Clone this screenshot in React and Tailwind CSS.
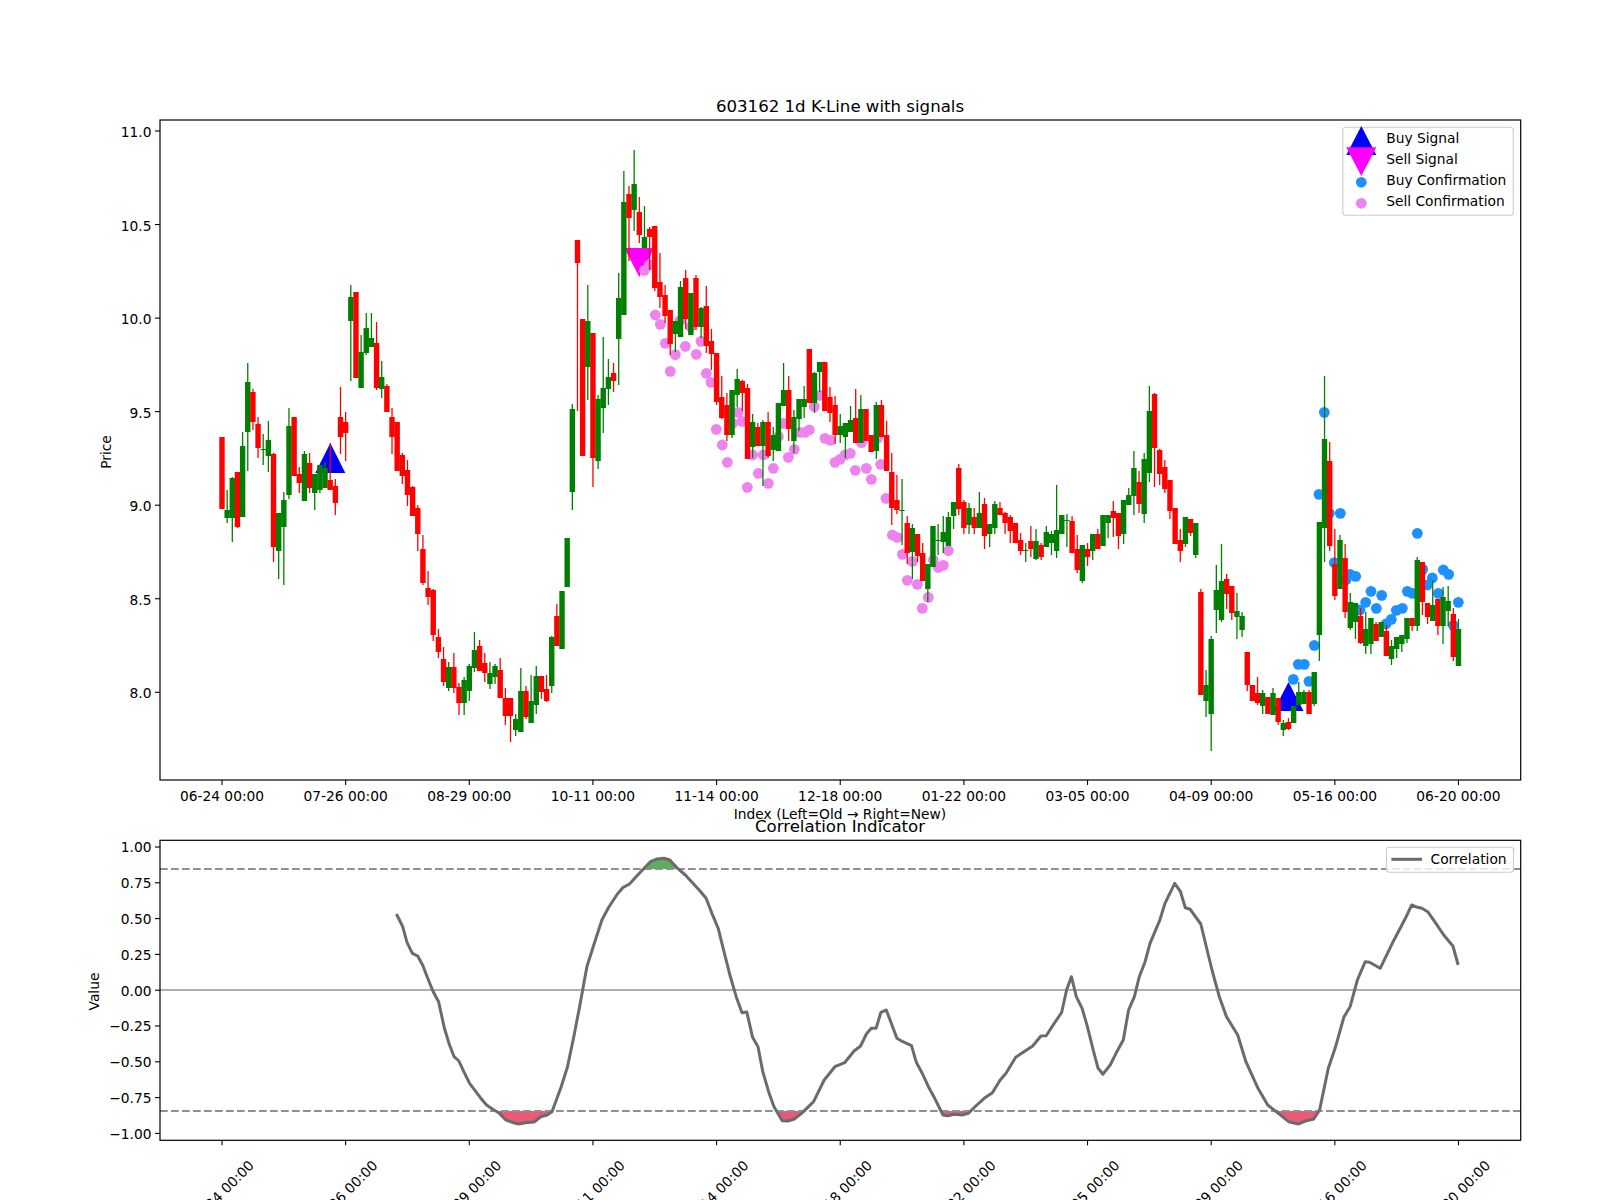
import React from 'react';

const FONT = "font-['DejaVu_Sans','Liberation_Sans',sans-serif]";

const AX_LEFT = 160;
const AX_RIGHT = 1520.7;
const stepX = (i) => 222 + 5.152 * i;

const TICK_LABELS = ['06-24', '07-26', '08-29', '10-11', '11-14', '12-18', '01-22', '03-05', '04-09', '05-16', '06-20'].map(
  (d, n) => ({ label: `${d} 00:00`, x: stepX(n * 24) })
);

// color, body top, body bottom, wick top, wick bottom (pixels on the page)
const CANDLES = [
  ['r',437,509,437,509],['g',510,518,490,523],['g',478,518,477,542],['r',472,527,472,528],['g',446,517,432,517],
  ['g',382,432,363,471],['r',392,422,389,430],['r',424,448,417,458],['g',449,450,434,465],['g',440,456,421,472],
  ['r',454,547,453,562],['g',513,551,513,579],['g',500,527,492,585],['g',426,495,408,499],['r',417,476,417,476],
  ['r',474,483,467,493],['g',454,501,451,501],['r',463,488,453,493],['g',474,493,474,510],['g',465,490,465,493],
  ['g',468,488,462,488],['r',480,490,443,490],['r',486,503,479,515],['r',417,437,387,454],['r',422,433,412,461],
  ['g',297,321,285,381],['r',292,378,292,378],['g',352,388,335,388],['g',328,353,313,355],['g',338,347,313,347],
  ['r',343,388,322,390],['g',377,389,361,398],['r',386,412,384,412],['r',417,437,408,454],['r',422,471,422,471],
  ['r',455,476,453,484],['r',470,495,460,506],['r',487,516,486,516],['r',508,534,505,551],['r',549,583,535,585],
  ['r',588,597,571,605],['r',590,635,589,641],['r',637,652,629,658],['r',659,682,647,686],['g',667,688,662,691],
  ['r',667,688,653,693],['r',687,703,683,715],['g',680,703,677,715],['g',666,691,664,701],['g',650,668,632,672],
  ['r',646,671,640,671],['r',663,673,653,682],['g',673,684,662,689],['g',666,677,664,684],['r',670,698,658,698],
  ['r',698,716,688,725],['r',698,716,698,742],['g',719,730,714,736],['g',691,732,668,732],['r',691,717,686,719],
  ['g',701,723,675,723],['g',676,705,666,714],['r',676,692,676,699],['r',689,701,675,702],['g',637,686,636,693],
  ['r',616,646,604,646],['g',591,649,591,649],['g',538,587,538,587],['g',409,492,404,510],['r',240,263,240,411],
  ['r',319,456,319,456],['g',321,367,285,400],['r',333,458,333,487],['g',399,461,395,469],['g',388,408,337,433],
  ['g',377,389,359,405],['r',373,381,363,392],['g',298,339,273,385],['g',202,315,171,315],['r',194,218,186,261],
  ['g',184,210,150,231],['r',212,235,197,243],['g',237,248,206,249],['r',229,237,227,270],['r',226,288,226,291],
  ['r',282,297,253,308],['r',295,316,285,323],['r',310,344,310,355],['g',321,334,321,352],['g',287,337,281,337],
  ['r',278,319,270,329],['g',293,335,293,335],['r',278,327,275,330],['g',308,327,307,338],['r',306,346,286,353],
  ['r',341,354,329,370],['r',353,402,353,405],['r',397,418,376,419],['r',405,435,393,441],['g',390,435,390,438],
  ['g',379,395,369,407],['r',381,393,380,411],['r',388,459,384,459],['g',422,447,414,458],['r',427,446,423,446],
  ['g',422,446,420,486],['r',422,456,412,458],['g',435,450,427,461],['g',403,451,403,451],['g',390,406,363,406],
  ['r',390,429,376,441],['g',417,441,410,453],['g',399,419,399,431],['g',399,407,386,418],['r',349,403,349,403],
  ['g',373,403,372,413],['g',362,372,362,392],['r',362,411,362,411],['r',397,413,387,422],['r',405,435,396,444],
  ['g',426,435,414,443],['g',423,437,423,458],['g',420,432,406,432],['r',418,443,389,443],['g',409,443,395,443],
  ['r',409,441,409,441],['r',435,452,435,452],['g',405,451,402,459],['r',405,437,400,437],['r',435,471,421,471],
  ['r',472,508,453,525],['r',500,510,475,514],['g',510,511,479,545],['r',523,553,516,564],['g',528,552,524,579],
  ['r',534,556,534,562],['r',553,581,543,581],['g',564,589,564,602],['g',526,567,526,567],['g',540,541,524,555],
  ['g',532,542,516,553],['g',517,546,512,546],['g',502,516,502,529],['r',468,509,464,515],['r',502,528,500,534],
  ['g',508,525,503,534],['r',517,528,508,534],['g',513,528,492,528],['r',504,536,498,549],['g',524,534,524,547],
  ['g',504,528,501,534],['r',508,515,502,515],['r',513,523,512,534],['r',517,531,515,543],['r',523,543,523,543],
  ['r',540,551,533,555],['g',550,551,543,562],['r',541,549,526,557],['g',541,559,529,560],['r',545,557,543,560],
  ['g',532,547,526,547],['g',534,543,531,555],['g',530,551,485,558],['g',515,534,515,534],['g',520,521,514,547],
  ['r',521,553,516,553],['r',549,570,535,573],['g',545,581,545,583],['r',549,557,543,566],['g',534,551,534,560],
  ['r',534,549,529,549],['g',515,546,515,546],['g',515,523,515,538],['r',511,518,501,537],['r',513,536,513,549],
  ['g',500,534,500,544],['g',495,505,488,505],['g',468,496,451,515],['r',482,504,471,513],['g',459,514,453,523],
  ['g',411,473,386,482],['r',394,448,393,487],['r',450,474,449,485],['r',467,489,460,493],['r',480,511,480,519],
  ['r',508,544,508,544],['r',540,551,529,562],['g',517,544,517,547],['r',519,533,519,536],['g',523,555,523,558],
  ['r',592,695,589,695],['g',685,701,670,717],['g',639,714,636,751],['g',590,610,565,633],['g',581,620,544,622],
  ['r',579,594,574,609],['r',586,613,586,620],['g',611,617,593,639],['g',616,630,612,637],['r',652,685,652,691],
  ['r',685,701,685,701],['r',693,703,677,705],['g',693,706,690,714],['r',697,714,697,714],['g',693,715,688,715],
  ['r',698,722,698,725],['g',723,730,720,736],['r',722,729,718,730],['g',706,723,706,723],['g',692,705,682,705],
  ['g',692,704,690,704],['r',692,714,690,714],['g',672,704,672,706],['g',522,635,522,661],['g',439,528,376,562],
  ['r',461,546,442,551],['r',564,596,529,600],['g',540,589,535,589],['r',558,612,544,618],['g',602,628,593,630],
  ['g',603,622,603,639],['r',616,643,608,644],['g',629,646,612,654],['g',618,644,618,654],['r',624,641,622,641],
  ['g',622,637,622,637],['r',631,656,625,656],['g',646,659,640,665],['g',637,649,637,658],['g',635,644,635,652],
  ['g',618,639,618,643],['r',618,626,618,631],['g',560,626,557,631],['r',562,602,562,615],['r',603,617,603,624],
  ['g',605,621,580,621],['r',599,626,599,635],['g',597,626,587,644],['g',601,611,586,626],['r',614,657,608,661],
  ['g',629,666,619,666],
];

// dots were read off the crops, so they keep the crop's origin
const VIOLET_DOTS = [
  [253,421],[268,405],[286,555],[301,583],[316,640],[346,674],[331,724],[376,649],[409,673],[423,634],[439,730],[453,757],
  [360,572],[392,590],[469,898],[487,945],[502,997],[534,847],[546,874],[518,880],[562,1072],[595,1030],[625,1060],[640,1015],
  [578,975],[610,975],[685,982],[703,958],[655,920],[670,880],[720,907],[735,907],[748,900],[763,830],[780,796],[795,925],
  [811,931],[825,997],[840,988],[855,975],[871,970],[886,1021],[904,938],[919,1015],[934,1048],[952,925],[962,1003],[978,1105],
  [997,1215],[1012,1222],[1027,1273],[1057,1294],[1042,1351],[1072,1363],[1087,1435],[1105,1402],[1120,1290],[1135,1312],[1150,1306],[1165,1262],
].map(([x, y]) => [560 + x / 3, 130 + y / 3]);

const BLUE_DOTS = [
  [493,127],[477,373],[508,430],[541,430],[463,826],[415,883],[433,883],[400,928],[447,934],[523,578],[570,613],[587,619],[558,630],
  [633,664],[665,676],[617,697],[649,715],[600,720],[678,762],[694,748],[709,721],[727,715],[742,664],[757,670],[772,490],[788,598],
  [802,645],[817,624],[835,670],[850,600],[866,613],[895,697],[880,766],
].map(([x, y]) => [1160 + x / 3, 370 + y / 3]);

const LINE_LEFT = [
  [694,282],[707,320],[716,367],[727,400],[738,408],[748,435],[760,480],[770,515],[781,545],[793,625],[803,672],[813,710],[823,723],
  [833,755],[845,790],[858,815],[870,838],[880,855],[893,868],[905,878],[920,900],[935,908],[947,912],[960,908],[978,906],[992,890],
  [1005,885],[1015,875],[1034,800],[1047,740],[1060,650],[1072,560],[1087,440],[1100,380],[1118,300],[1132,262],[1150,222],[1162,202],
  [1175,192],[1190,168],[1205,145],[1218,125],[1232,117],[1246,115],[1258,120],[1272,142],[1290,165],[1305,188],[1320,212],[1333,235],
  [1345,280],[1358,325],[1370,395],[1382,465],[1395,530],[1407,578],[1417,576],[1429,652],[1440,680],[1450,755],[1462,815],[1473,860],
  [1490,902],[1502,903],[1515,897],[1530,880],
].map(([x, y]) => [60 + x * 0.4847, 820 + y / 3]);

const LINE_RIGHT = [
  [28,845],[50,780],[72,740],[92,728],[112,692],[125,678],[137,642],[147,625],[157,625],[167,577],[178,570],[188,608],[200,655],[212,665],
  [230,677],[240,727],[253,762],[265,800],[278,835],[295,885],[305,887],[318,883],[335,885],[347,880],[365,855],[380,835],[397,818],
  [413,780],[425,760],[445,712],[462,695],[480,678],[497,648],[508,647],[520,620],[540,577],[550,510],[560,470],[570,530],[582,565],
  [593,620],[605,690],[615,745],[625,763],[640,735],[652,700],[667,660],[678,570],[690,530],[700,470],[712,425],[722,370],[742,302],
  [753,250],[773,190],[785,215],[795,263],[805,268],[827,312],[840,390],[850,450],[865,530],[880,590],[903,645],[920,725],[945,805],
  [965,855],[985,878],[1008,905],[1028,912],[1045,902],[1060,897],[1072,870],[1090,745],[1105,680],[1122,592],[1135,560],[1150,480],
  [1166,425],[1175,427],[1197,445],[1222,370],[1248,298],[1262,255],[1270,260],[1283,265],[1295,275],[1312,310],[1328,345],[1347,378],[1358,435],
].map(([x, y]) => [800 + x * 0.4847, 820 + y / 3]);

const CORR_LINE = [...LINE_LEFT, ...LINE_RIGHT];
const corrPath = CORR_LINE.map(([x, y], i) => `${i ? 'L' : 'M'}${x.toFixed(1)} ${y.toFixed(1)}`).join(' ');
const corrArea = `${corrPath} L1458 990 L${CORR_LINE[0][0].toFixed(1)} 990 Z`;

const triangle = (cx, apex, base, half = 15) => `${cx},${apex} ${cx - half},${base} ${cx + half},${base}`;

const Axes = ({ top, bottom, yTicks, labelDy, children }) => (
  <>
    {children}
    <rect x={AX_LEFT} y={top} width={AX_RIGHT - AX_LEFT} height={bottom - top} fill="none" stroke="#000" strokeWidth="1.2" />
    {TICK_LABELS.map((t) => (
      <line key={t.label} x1={t.x} x2={t.x} y1={bottom} y2={bottom + 5} stroke="#000" strokeWidth="1.1" />
    ))}
    {yTicks.map((t) => (
      <g key={t.label}>
        <line x1={AX_LEFT - 5} x2={AX_LEFT} y1={t.y} y2={t.y} stroke="#000" strokeWidth="1.1" />
        <text x={AX_LEFT - 8.5} y={t.y + labelDy} textAnchor="end" fontSize="13.8">{t.label}</text>
      </g>
    ))}
  </>
);

const KLinePanel = () => {
  const yTicks = ['11.0', '10.5', '10.0', '9.5', '9.0', '8.5', '8.0'].map((label, n) => ({ label, y: 131 + n * 93.55 }));
  return (
    <svg className="block overflow-visible" width="1600" height="730" viewBox="0 90 1600 730">
      <text x="840" y="111.5" textAnchor="middle" fontSize="16.6">603162 1d K-Line with signals</text>

      <Axes top={120} bottom={780} yTicks={yTicks} labelDy={6}>
        <polygon points={triangle(330.3, 443, 473)} fill="#0000ff" />
        <polygon points={triangle(1288.5, 682, 711)} fill="#0000ff" />
        <polygon points={triangle(639.3, 277, 248)} fill="#ff00ff" />
        {VIOLET_DOTS.map(([x, y], i) => <circle key={i} cx={x} cy={y} r="5.4" fill="#ee82ee" />)}
        {BLUE_DOTS.map(([x, y], i) => <circle key={i} cx={x} cy={y} r="5.4" fill="#1e90ff" />)}
        {CANDLES.map(([c, bodyTop, bodyBottom, wickTop, wickBottom], i) => {
          const x = stepX(i);
          const color = c === 'r' ? '#ff0000' : '#008000';
          return (
            <g key={i}>
              <line x1={x} x2={x} y1={wickTop} y2={wickBottom} stroke={color} strokeWidth="1.3" />
              <rect x={x - 2.7} y={bodyTop} width="5.4" height={bodyBottom - bodyTop} fill={color} />
            </g>
          );
        })}
      </Axes>

      {TICK_LABELS.map((t) => (
        <text key={t.label} x={t.x} y="801" textAnchor="middle" fontSize="13.8">{t.label}</text>
      ))}
      <text x="840" y="819" textAnchor="middle" fontSize="13.8">Index (Left=Old → Right=New)</text>
      <text x="111" y="452" textAnchor="middle" fontSize="13.8" transform="rotate(-90 111 452)">Price</text>

      {/* legend */}
      <rect x="1342.8" y="127.3" width="170.5" height="88" rx="3" fill="#fff" fillOpacity="0.8" stroke="#ccc" strokeWidth="1.1" />
      <polygon points={triangle(1361.3, 126, 155)} fill="#0000ff" />
      <polygon points={triangle(1361.3, 176, 147.3)} fill="#ff00ff" />
      <circle cx="1361.3" cy="182.3" r="5.4" fill="#1e90ff" />
      <circle cx="1361.3" cy="203.3" r="5.4" fill="#ee82ee" />
      <text x="1386.2" y="143.3" fontSize="13.8">Buy Signal</text>
      <text x="1386.2" y="164.3" fontSize="13.8">Sell Signal</text>
      <text x="1386.2" y="185.3" fontSize="13.8">Buy Confirmation</text>
      <text x="1386.2" y="206.3" fontSize="13.8">Sell Confirmation</text>
    </svg>
  );
};

const CorrelationPanel = () => {
  const yTicks = ['1.00', '0.75', '0.50', '0.25', '0.00', '−0.25', '−0.50', '−0.75', '−1.00'].map((label, n) => ({
    label,
    y: 847 + n * 35.8,
  }));
  return (
    <svg className="block overflow-visible" width="1600" height="380" viewBox="0 820 1600 380">
      <defs>
        <clipPath id="over-high"><rect x="160" y="820" width="1361" height="49" /></clipPath>
        <clipPath id="under-low"><rect x="160" y="1111" width="1361" height="30" /></clipPath>
      </defs>
      <text x="840" y="831.5" textAnchor="middle" fontSize="16.6">Correlation Indicator</text>

      <Axes top={840.3} bottom={1140.3} yTicks={yTicks} labelDy={5.4}>
        <path d={corrArea} fill="#5fac5f" clipPath="url(#over-high)" />
        <path d={corrArea} fill="#e85a76" clipPath="url(#under-low)" />
        <line x1={AX_LEFT} x2={AX_RIGHT} y1="869" y2="869" stroke="#909090" strokeWidth="2.2" strokeDasharray="7.7 3.3" />
        <line x1={AX_LEFT} x2={AX_RIGHT} y1="1111" y2="1111" stroke="#909090" strokeWidth="2.2" strokeDasharray="7.7 3.3" />
        <line x1={AX_LEFT} x2={AX_RIGHT} y1="990" y2="990" stroke="#aeaeae" strokeWidth="2.2" />
        <path d={corrPath} fill="none" stroke="#6b6b6b" strokeWidth="3" strokeLinejoin="round" />
      </Axes>

      {TICK_LABELS.map((t) => (
        <text key={t.label} x={t.x - 0.5} y="1192.5" textAnchor="middle" dominantBaseline="central" fontSize="13.8" transform={`rotate(-45 ${t.x - 0.5} 1192.5)`}>
          {t.label}
        </text>
      ))}
      <text x="99" y="991.5" textAnchor="middle" fontSize="13.8" transform="rotate(-90 99 991.5)">Value</text>

      {/* legend */}
      <rect x="1386.5" y="847.3" width="127" height="25" rx="3" fill="#fff" fillOpacity="0.8" stroke="#ccc" strokeWidth="1.1" />
      <line x1="1391.4" x2="1422" y1="859.3" y2="859.3" stroke="#6b6b6b" strokeWidth="3" />
      <text x="1430.5" y="864.3" fontSize="13.8">Correlation</text>
    </svg>
  );
};

export default function App() {
  return (
    <div className={`w-[1600px] h-[1200px] overflow-hidden bg-white pt-[90px] flex flex-col ${FONT}`}>
      <KLinePanel />
      <CorrelationPanel />
    </div>
  );
}
